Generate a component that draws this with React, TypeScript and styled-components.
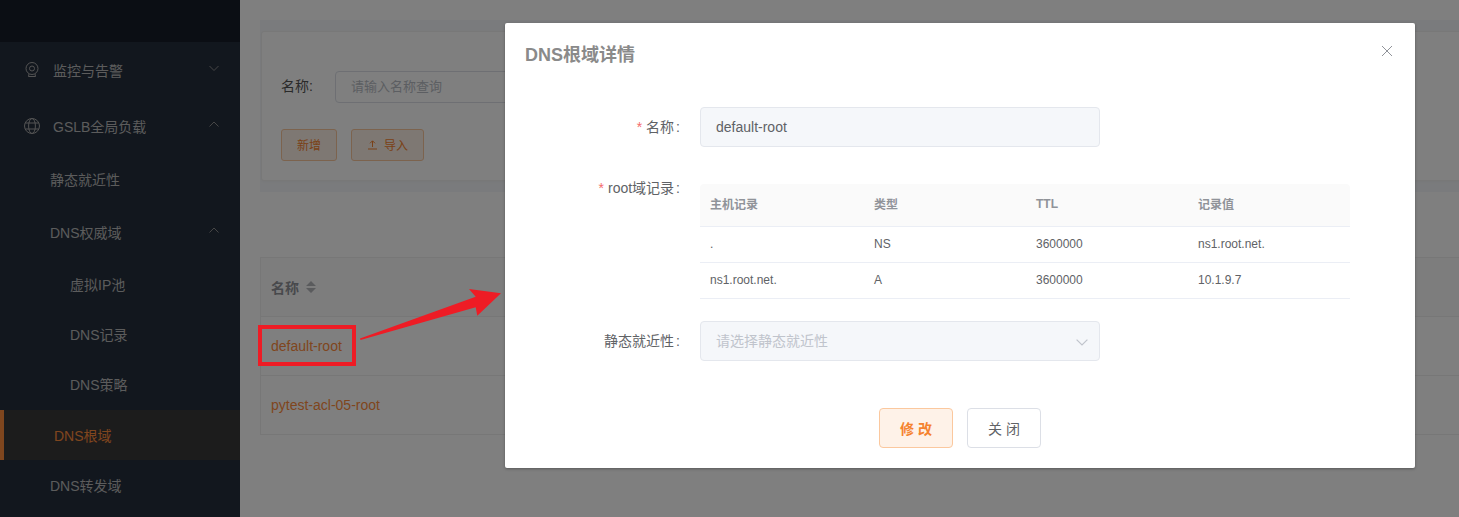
import styled, { createGlobalStyle } from "styled-components";

const GlobalStyle = createGlobalStyle`
  html, body {
    margin: 0;
    padding: 0;
    height: 100%;
    overflow: hidden;
    background: #fff;
    font-family: "Liberation Sans", "Noto Sans CJK SC", sans-serif;
  }
  * { box-sizing: border-box; }
`;

const Page = styled.div`
  position: relative;
  display: flex;
  width: 1459px;
  height: 517px;
  overflow: hidden;
`;

const Sidebar = styled.aside`
  flex: 0 0 240px;
  background: #242f3d;
`;

const SideTop = styled.div`
  height: 42px;
  background: #161d29;
`;

const SideRow = styled.div<{ $h: number; $indent: number; $active?: boolean }>`
  position: relative;
  display: flex;
  align-items: center;
  height: ${(p) => p.$h}px;
  padding-left: ${(p) => p.$indent}px;
  font-size: 14px;
  color: ${(p) => (p.$active ? "#ff8c3c" : "#b8b8b8")};
  background: ${(p) => (p.$active ? "#383838" : "transparent")};
  border-left: ${(p) => (p.$active ? "4px solid #ff8c3c" : "none")};
`;

const SideSubRow = styled(SideRow)`
  padding-bottom: 2px;
`;

const SideIcon = styled.span`
  display: flex;
  justify-content: center;
  width: 21px;
  margin-right: 11px;
  color: #a8a8a8;
`;

const SideChevron = styled.span`
  position: absolute;
  left: 209px;
  top: 50%;
  margin-top: -7px;
  height: 10px;
  color: #8c8c8c;
  display: flex;
`;

const Main = styled.main`
  flex: 1;
  min-width: 0;
  background: #fff;
  padding-top: 20px;
`;

const SearchBand = styled.section`
  margin: 0 -20px 0 20px;
  padding: 11px 0;
  background: #f5f7fa;
  height: 172px;
`;

const SearchCard = styled.div`
  height: 150px;
  margin-left: 1px;
  background: #fff;
  border: 1px solid #f0f0f0;
  border-radius: 3px;
  padding: 39px 19px 0;
  box-shadow: 0 1px 3px rgba(0, 0, 0, 0.03);
`;

const SearchRow = styled.div`
  display: flex;
  align-items: center;
  height: 32px;
  font-size: 14px;
  color: #555;
`;

const SearchLabel = styled.span`
  width: 54px;
  padding-bottom: 4px;
`;

const SearchInput = styled.div`
  width: 400px;
  height: 32px;
  display: flex;
  align-items: center;
  padding: 0 0 4px 15px;
  border: 1px solid #dcdfe6;
  border-radius: 4px;
  font-size: 13px;
  color: #b8bcc4;
`;

const ToolRow = styled.div`
  display: flex;
  gap: 14px;
  margin-top: 26px;
`;

const GhostButton = styled.div`
  display: flex;
  align-items: center;
  justify-content: center;
  gap: 6px;
  height: 32px;
  padding: 0 15px 1px;
  border: 1px solid #f9c79d;
  border-radius: 3px;
  background: #fdf0e6;
  font-size: 12px;
  color: #f5832f;
`;

const DataTable = styled.section`
  margin: 65px -20px 0 20px;
  border: 1px solid #efefef;
`;

const DataHead = styled.div`
  display: flex;
  align-items: center;
  gap: 7px;
  height: 59px;
  padding-left: 10px;
  border-bottom: 1px solid #efefef;
  background: #fbfbfb;
  font-size: 14px;
  font-weight: 700;
  color: #909399;
`;

const DataRow = styled.div`
  display: flex;
  align-items: center;
  height: 59px;
  padding-left: 10px;
  border-bottom: 1px solid #efefef;
  font-size: 14px;
  color: #ff8c3c;
  &:last-child { border-bottom: none; height: 58px; }
`;

const Overlay = styled.div`
  position: absolute;
  inset: 0;
  background: rgba(0, 0, 0, 0.5);
`;

const Modal = styled.div`
  position: absolute;
  left: 505px;
  top: 23px;
  width: 910px;
  height: 445px;
  background: #fff;
  border-radius: 2px;
  box-shadow: 0 1px 3px rgba(0, 0, 0, 0.3);
`;

const ModalHead = styled.header`
  height: 64px;
  padding: 21px 20px 0;
  font-size: 18px;
  line-height: 22px;
  font-weight: 700;
  color: #8a8a8a;
`;

const CloseButton = styled.span`
  position: absolute;
  top: 22px;
  right: 22px;
  display: flex;
  color: #909399;
`;

const FormRow = styled.div<{ $mt: number }>`
  display: grid;
  grid-template-columns: 175px 1fr;
  column-gap: 20px;
  margin-top: ${(p) => p.$mt}px;
`;

const Label = styled.label`
  display: flex;
  justify-content: flex-end;
  align-items: flex-start;
  line-height: 40px;
  font-size: 14px;
  color: #606266;
`;

const LabelTight = styled(Label)`
  line-height: 8px;
`;

const Star = styled.span`
  color: #f56c6c;
  margin-right: 4px;
`;

const Colon = styled.span`
  margin-left: 2px;
`;

const Control = styled.div<{ $muted?: boolean }>`
  position: relative;
  display: flex;
  align-items: center;
  width: 400px;
  height: 40px;
  padding: 0 0 ${(p) => (p.$muted ? 2 : 0)}px 15px;
  background: #f5f7fa;
  border: 1px solid #e4e7ed;
  border-radius: 4px;
  font-size: 14px;
  color: ${(p) => (p.$muted ? "#c0c4cc" : "#606266")};
`;

const ControlCaret = styled.span`
  position: absolute;
  right: 11px;
  top: 14px;
  display: flex;
  color: #c0c4cc;
`;

const RecordTable = styled.div`
  width: 650px;
  font-size: 12px;
  color: #606266;
`;

const RecordRow = styled.div<{ $head?: boolean }>`
  display: grid;
  grid-template-columns: 164px 162px 162px 1fr;
  align-items: center;
  height: ${(p) => (p.$head ? 43 : 36)}px;
  padding: 0 0 ${(p) => (p.$head ? 3 : 2)}px 10px;
  border-bottom: 1px solid #ebeef5;
  background: ${(p) => (p.$head ? "#fafafa" : "#fff")};
  color: ${(p) => (p.$head ? "#909399" : "#606266")};
  font-weight: ${(p) => (p.$head ? 700 : 400)};
  border-radius: ${(p) => (p.$head ? "4px 4px 0 0" : "0")};
`;

const ModalFoot = styled.footer`
  display: flex;
  justify-content: center;
  gap: 14px;
  margin-top: 47px;
`;

const ModalButton = styled.div<{ $primary?: boolean }>`
  display: flex;
  align-items: center;
  justify-content: center;
  width: 74px;
  height: 40px;
  border-radius: 4px;
  font-size: 14px;
  white-space: pre;
  font-weight: ${(p) => (p.$primary ? 700 : 400)};
  color: ${(p) => (p.$primary ? "#f5832f" : "#606266")};
  background: ${(p) => (p.$primary ? "#fef2e8" : "#fff")};
  border: 1px solid ${(p) => (p.$primary ? "#fbc89e" : "#dcdfe6")};
`;

const RedBox = styled.div`
  position: absolute;
  left: 258px;
  top: 325px;
  width: 98px;
  height: 41px;
  border: 4px solid #ee1c25;
`;

const ArrowSvg = styled.svg`
  position: absolute;
  left: 0;
  top: 0;
  pointer-events: none;
`;

const Chevron = ({ up, size = 10 }: { up?: boolean; size?: number }) => (
  <svg width={size} height={size} viewBox="0 0 10 10" fill="none" stroke="currentColor" strokeWidth="1">
    <path d={up ? "M0.5 7.5 L5 3 L9.5 7.5" : "M0.5 3 L5 7.5 L9.5 3"} />
  </svg>
);

const CameraIcon = () => (
  <svg width="16" height="18" viewBox="0 0 16 18" fill="none" stroke="currentColor" strokeWidth="1">
    <circle cx="8" cy="7.5" r="6" />
    <circle cx="8" cy="7.5" r="2.5" />
    <path d="M5 13 L4.5 15.5 H11.5 L11 13" />
  </svg>
);

const GlobeIcon = () => (
  <svg width="16" height="16" viewBox="0 0 16 16" fill="none" stroke="currentColor" strokeWidth="1">
    <circle cx="8" cy="8" r="7.5" />
    <ellipse cx="8" cy="8" rx="3.4" ry="7.5" />
    <path d="M1.2 5 H14.8 M1.2 11 H14.8" />
  </svg>
);

const UploadIcon = () => (
  <svg width="11" height="11" viewBox="0 0 11 11" fill="none" stroke="currentColor" strokeWidth="1">
    <path d="M1 10 H10 M5.5 8 V2 M3 4.3 L5.5 1.8 L8 4.3" />
  </svg>
);

const SortIcon = () => (
  <svg width="10" height="12" viewBox="0 0 10 12" fill="#b4b6bb">
    <path d="M5 0 L10 5 H0 Z M0 7 H10 L5 12 Z" />
  </svg>
);

const CloseIcon = () => (
  <svg width="12" height="12" viewBox="0 0 12 12" fill="none" stroke="currentColor" strokeWidth="1">
    <path d="M1 1 L11 11 M11 1 L1 11" />
  </svg>
);

const records = [
  { host: ".", type: "NS", ttl: "3600000", value: "ns1.root.net." },
  { host: "ns1.root.net.", type: "A", ttl: "3600000", value: "10.1.9.7" },
];

const App = () => {
  return (
    <Page>
      <GlobalStyle />
      <Sidebar>
        <SideTop />
        <SideRow $h={56} $indent={21}>
          <SideIcon><CameraIcon /></SideIcon>监控与告警
          <SideChevron><Chevron /></SideChevron>
        </SideRow>
        <SideRow $h={56} $indent={21}>
          <SideIcon><GlobeIcon /></SideIcon>GSLB全局负载
          <SideChevron><Chevron up /></SideChevron>
        </SideRow>
        <SideRow $h={50} $indent={50}>静态就近性</SideRow>
        <SideRow $h={56} $indent={50}>
          DNS权威域
          <SideChevron><Chevron up /></SideChevron>
        </SideRow>
        <SideSubRow $h={50} $indent={70}>虚拟IP池</SideSubRow>
        <SideSubRow $h={50} $indent={70}>DNS记录</SideSubRow>
        <SideSubRow $h={50} $indent={70}>DNS策略</SideSubRow>
        <SideRow $h={50} $indent={50} $active>DNS根域</SideRow>
        <SideRow $h={50} $indent={50}>DNS转发域</SideRow>
      </Sidebar>

      <Main>
        <SearchBand>
          <SearchCard>
            <SearchRow>
              <SearchLabel>名称:</SearchLabel>
              <SearchInput>请输入名称查询</SearchInput>
            </SearchRow>
            <ToolRow>
              <GhostButton>新增</GhostButton>
              <GhostButton><UploadIcon />导入</GhostButton>
            </ToolRow>
          </SearchCard>
        </SearchBand>
        <DataTable>
          <DataHead>名称<SortIcon /></DataHead>
          <DataRow>default-root</DataRow>
          <DataRow>pytest-acl-05-root</DataRow>
        </DataTable>
      </Main>

      <Overlay />

      <RedBox />
      <ArrowSvg width="1459" height="517">
        <polygon points="360,338.5 475.7,296.7 469,289 501,293.3 477.3,315.7 475.7,307.3 360.5,340" fill="#ee1c25" />
      </ArrowSvg>

      <Modal>
        <ModalHead>DNS根域详情</ModalHead>
        <CloseButton><CloseIcon /></CloseButton>

        <FormRow $mt={20}>
          <Label><Star>*</Star>名称<Colon>:</Colon></Label>
          <Control>default-root</Control>
        </FormRow>

        <FormRow $mt={37}>
          <LabelTight><Star>*</Star>root域记录<Colon>:</Colon></LabelTight>
          <RecordTable>
            <RecordRow $head>
              <span>主机记录</span><span>类型</span><span>TTL</span><span>记录值</span>
            </RecordRow>
            {records.map((r) => (
              <RecordRow key={r.host}>
                <span>{r.host}</span><span>{r.type}</span><span>{r.ttl}</span><span>{r.value}</span>
              </RecordRow>
            ))}
          </RecordTable>
        </FormRow>

        <FormRow $mt={22}>
          <Label>静态就近性<Colon>:</Colon></Label>
          <Control $muted>
            请选择静态就近性
            <ControlCaret><Chevron size={12} /></ControlCaret>
          </Control>
        </FormRow>

        <ModalFoot>
          <ModalButton $primary>修 改</ModalButton>
          <ModalButton>关 闭</ModalButton>
        </ModalFoot>
      </Modal>
    </Page>
  );
};

export default App;
